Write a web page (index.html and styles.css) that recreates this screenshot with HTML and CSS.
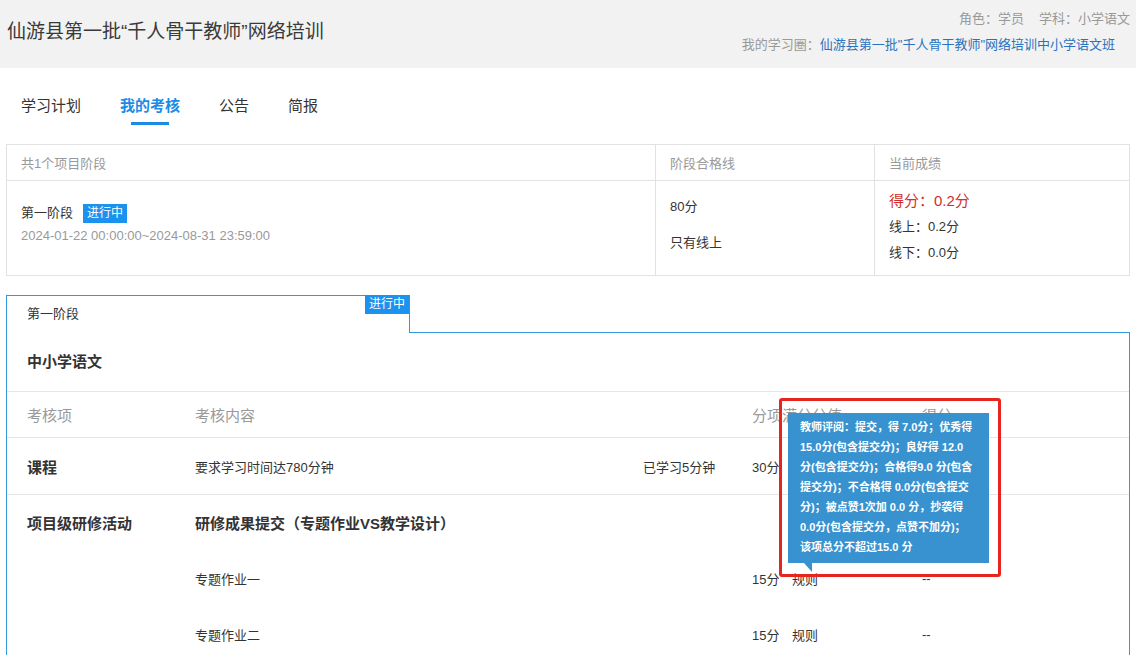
FILE: index.html
```html
<!DOCTYPE html>
<html lang="zh-CN">
<head>
<meta charset="utf-8">
<title>我的考核</title>
<link rel="stylesheet" href="styles.css">
</head>
<body>
<header class="top">
  <h1 class="title">仙游县第一批<span class="q">“</span>千人骨干教师<span class="q">”</span>网络培训</h1>
  <div class="meta">
    <div class="meta-row">角色：学员<span class="sep"></span>学科：小学语文</div>
    <div class="meta-row circle">我的学习圈：<a class="link" href="#">仙游县第一批"千人骨干教师"网络培训中小学语文班</a></div>
  </div>
</header>

<nav class="nav">
  <a class="nav-item" href="#">学习计划</a>
  <a class="nav-item active" href="#">我的考核</a>
  <a class="nav-item" href="#">公告</a>
  <a class="nav-item" href="#">简报</a>
</nav>

<div class="stages">
  <div class="st-head">共1个项目阶段</div>
  <div class="st-head">阶段合格线</div>
  <div class="st-head last">当前成绩</div>
  <div class="st-cell st-name">
    <div class="line">第一阶段<span class="badge">进行中</span></div>
    <div class="line muted">2024-01-22 00:00:00~2024-08-31 23:59:00</div>
  </div>
  <div class="st-cell st-pass">
    <div>80分</div>
    <div>只有线上</div>
  </div>
  <div class="st-cell st-score last">
    <div class="score">得分：0.2分</div>
    <div>线上：0.2分</div>
    <div>线下：0.0分</div>
  </div>
</div>

<section class="phase">
  <div class="phase-tab">第一阶段<span class="badge tab-badge">进行中</span></div>
  <div class="phase-body">
    <h2 class="subject">中小学语文</h2>
    <div class="assess">
      <div class="row head">
        <div class="c1">考核项</div>
        <div class="c2">考核内容</div>
        <div class="c3"></div>
        <div class="c45">分项满分分值</div>
        <div class="c6">得分</div>
      </div>
      <div class="row course">
        <div class="c1 strong">课程</div>
        <div class="c2">要求学习时间达780分钟</div>
        <div class="c3">已学习5分钟</div>
        <div class="c4">30分</div>
        <div class="c5">规则</div>
        <div class="c6">--</div>
      </div>
      <div class="row sub first">
        <div class="c1 strong">项目级研修活动</div>
        <div class="c2 strong">研修成果提交（专题作业VS教学设计）</div>
        <div class="c3"></div>
        <div class="c4"></div>
        <div class="c5"></div>
        <div class="c6"></div>
      </div>
      <div class="row sub">
        <div class="c1"></div>
        <div class="c2">专题作业一</div>
        <div class="c3"></div>
        <div class="c4">15分</div>
        <div class="c5 rule">规则
          <div class="tip">教师评阅：提交，得 7.0分；优秀得<br>15.0分(包含提交分)；良好得 12.0<br>分(包含提交分)；合格得9.0 分(包含<br>提交分)；不合格得 0.0分(包含提交<br>分)；被点赞1次加 0.0 分，抄袭得<br>0.0分(包含提交分，点赞不加分)；<br>该项总分不超过15.0 分</div>
          <div class="mark"></div>
        </div>
        <div class="c6">--</div>
      </div>
      <div class="row sub">
        <div class="c1"></div>
        <div class="c2">专题作业二</div>
        <div class="c3"></div>
        <div class="c4">15分</div>
        <div class="c5">规则</div>
        <div class="c6">--</div>
      </div>
    </div>
  </div>
</section>
</body>
</html>
```

FILE: styles.css
```css
* {
  box-sizing: border-box;
  margin: 0;
  padding: 0;
}

html {
  overflow: hidden;
}

body {
  width: 1136px;
  font-family: "Liberation Sans", "Noto Sans CJK SC", sans-serif;
  font-size: 13px;
  color: #333;
  background: #fff;
}

/* header */
.top {
  height: 68px;
  background: #f2f2f2;
  display: flex;
  justify-content: space-between;
  padding: 0 6px 0 7px;
}

.title {
  font-size: 19px;
  font-weight: normal;
  line-height: 28px;
  margin-top: 18px;
  color: #3a3a3a;
}

.q {
  font-family: "Liberation Sans", sans-serif;
}

.meta {
  padding-top: 9px;
  text-align: right;
  color: #999;
  font-size: 13px;
}

.meta-row {
  line-height: 20px;
}

.meta-row.circle {
  margin-top: 6px;
  padding-right: 15px;
}

.sep {
  display: inline-block;
  width: 15px;
}

.link {
  color: #2a72c0;
  text-decoration: none;
}

/* nav */
.nav {
  height: 76px;
  display: flex;
  gap: 39px;
  padding-left: 21px;
}

.nav-item {
  padding-top: 27px;
  font-size: 15px;
  line-height: 22px;
  color: #333;
  text-decoration: none;
}

.nav-item.active {
  color: #1a8ce6;
  font-weight: bold;
}

.nav-item.active::after {
  content: "";
  display: block;
  width: 38px;
  height: 3px;
  margin: 5px auto 0;
  background: #1a8ce6;
}

/* stages table */
.stages {
  margin: 0 6px;
  border: 1px solid #e2e2e2;
  display: grid;
  grid-template-columns: 649px 219px 1fr;
  grid-template-rows: 36px 94px;
}

.st-head {
  display: flex;
  align-items: center;
  padding-left: 14px;
  color: #999;
  border-right: 1px solid #e2e2e2;
  border-bottom: 1px solid #e2e2e2;
}

.st-cell {
  padding-left: 14px;
  border-right: 1px solid #e2e2e2;
}

.last {
  border-right: none;
}

.st-name {
  padding-top: 20px;
  line-height: 23px;
}

.muted {
  color: #999;
}

.badge {
  display: inline-block;
  height: 19px;
  line-height: 19px;
  padding: 0 4px;
  margin-left: 10px;
  font-size: 12px;
  color: #fff;
  background: #1a92ee;
  vertical-align: middle;
}

.st-pass {
  padding-top: 8px;
  line-height: 36px;
}

.st-score {
  padding-top: 7px;
  line-height: 26px;
}

.score {
  font-size: 15px;
  color: #d22f2a;
}

/* phase */
.phase {
  margin: 19px 6px 0;
}

.phase-tab {
  position: relative;
  z-index: 1;
  width: 404px;
  height: 38px;
  border: 1px solid #3399dd;
  border-bottom: none;
  background: #fff;
  margin-bottom: -1px;
  padding-left: 20px;
  line-height: 35px;
}

.tab-badge {
  position: absolute;
  top: -1px;
  right: 0;
  margin-left: 0;
  vertical-align: top;
}

.phase-body {
  border: 1px solid #3399dd;
  border-bottom: none;
  height: 400px;
}

.subject {
  height: 58px;
  line-height: 58px;
  padding-left: 20px;
  font-size: 15px;
  font-weight: bold;
  color: #333;
}

.row {
  display: grid;
  grid-template-columns: 188px 448px 109px 40px 130px 1fr;
}

.row > div {
  display: flex;
  align-items: center;
}

.c45 {
  grid-column: span 2;
}

.c1 {
  padding-left: 20px;
}

.head {
  height: 46px;
  border-top: 1px solid #e6e6e6;
  font-size: 15px;
  color: #999;
}

.course {
  height: 57px;
  border-top: 1px solid #e6e6e6;
}

.strong {
  font-size: 15px;
  font-weight: bold;
}

.sub {
  height: 56px;
}

.sub.first {
  border-top: 1px solid #e6e6e6;
}

/* tooltip overlay */
.rule {
  position: relative;
}

.tip {
  position: absolute;
  left: -4px;
  top: -137px;
  width: 201px;
  height: 150px;
  padding: 4px 0 0 12px;
  background: #3892cf;
  color: #fff;
  font-size: 11px;
  font-weight: bold;
  line-height: 20px;
  white-space: nowrap;
  display: block;
}

.tip::after {
  content: "";
  position: absolute;
  left: 16px;
  top: 100%;
  border-top: 9px solid #3892cf;
  border-left: 8px solid transparent;
}

.mark {
  position: absolute;
  left: -13px;
  top: -152px;
  width: 222px;
  height: 179px;
  border: 3px solid #e8241f;
  border-radius: 3px;
}
```
